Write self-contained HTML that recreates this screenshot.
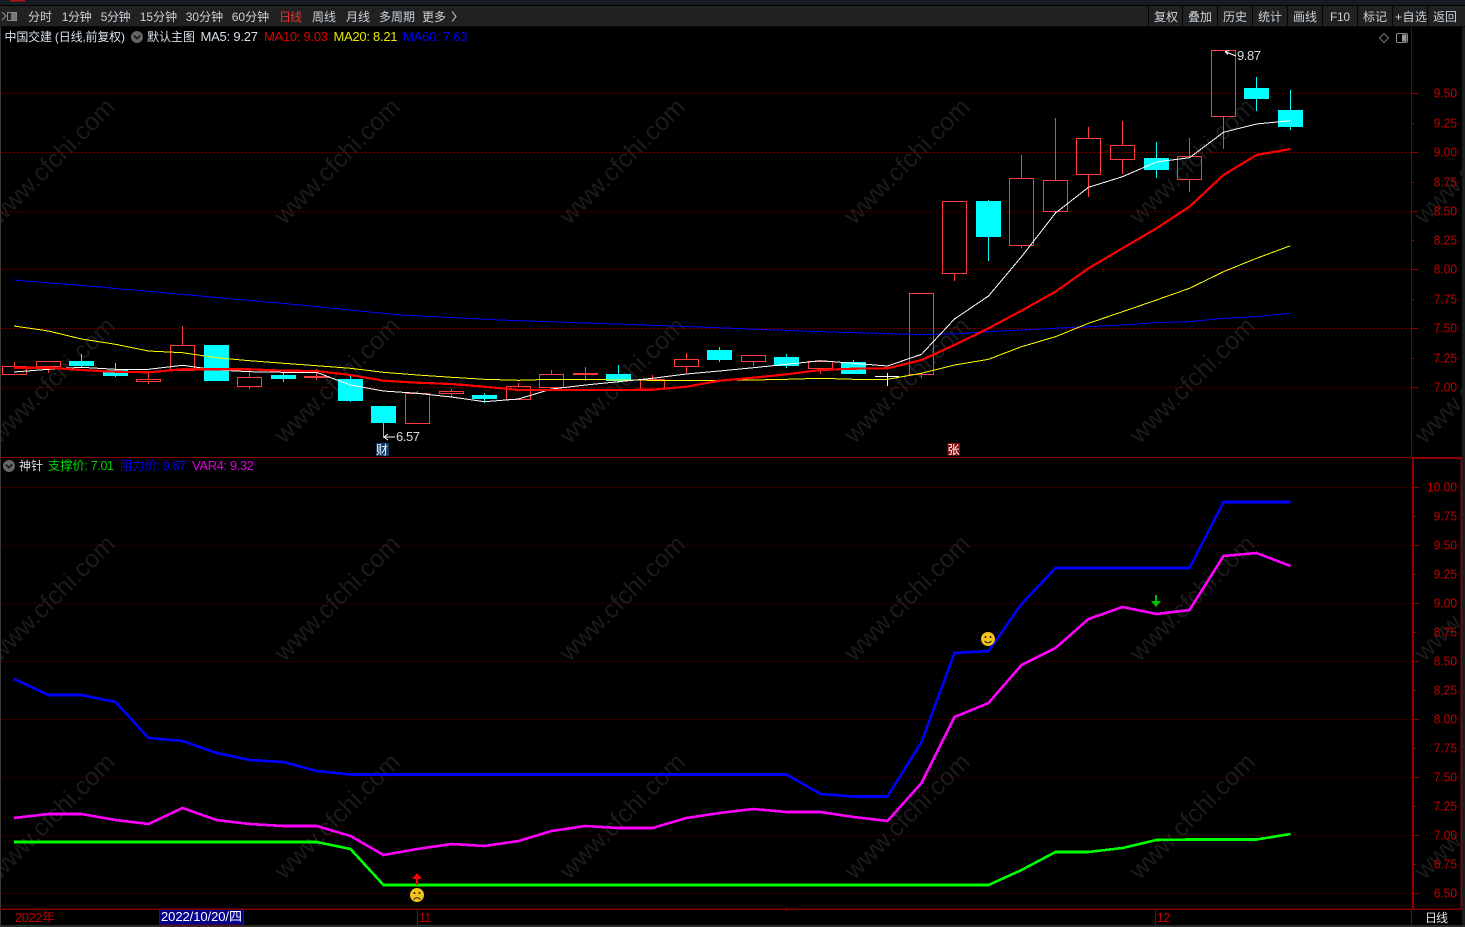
<!DOCTYPE html>
<html><head><meta charset="utf-8"><style>
html,body{margin:0;padding:0;background:#000;width:1465px;height:927px;overflow:hidden}
svg{display:block;font-family:"Liberation Sans","Noto Sans CJK SC",sans-serif}
.tb{fill:#c9d2da;font-size:12px}.ax{fill:#c00000;font-size:13px}
.wm{fill:#1b1b1b;font-size:25px;text-anchor:middle}
.l{fill:none;shape-rendering:crispEdges}
</style></head><body>
<svg width="1465" height="927" viewBox="0 0 1465 927" xmlns="http://www.w3.org/2000/svg">
<rect width="1465" height="927" fill="#000"/>
<!-- title / toolbar -->
<rect width="1465" height="5" fill="#171c22"/><rect x="10" width="15" height="1.5" fill="#b01818"/>
<rect y="6" width="1465" height="20" fill="#212121"/><rect y="26" width="1465" height="1" fill="#0a0a0a"/>
<g stroke="#050505"><path d="M1148.5 6V26M1182.5 6V26M1217.5 6V26M1252.5 6V26M1287.5 6V26M1322.5 6V26M1357.5 6V26M1392.5 6V26M1427.5 6V26"/></g>
<path d="M2 12l4 4-4 4" fill="none" stroke="#888" stroke-width="1.2"/><rect x="7.5" y="12.5" width="9" height="8" fill="#777" stroke="#888"/><rect x="8" y="13" width="3" height="7" fill="#222"/>
<g class="tb">
<text x="28" y="21" textLength="24">分时</text><text x="61.7" y="21" textLength="30">1分钟</text><text x="100.7" y="21" textLength="30">5分钟</text><text x="139.7" y="21" textLength="37.5">15分钟</text><text x="185.7" y="21" textLength="37.5">30分钟</text><text x="231.7" y="21" textLength="37.5">60分钟</text>
<text x="279" y="21" textLength="23" style="fill:#e83030">日线</text><text x="312" y="21" textLength="24">周线</text><text x="346" y="21" textLength="24">月线</text><text x="379" y="21" textLength="36">多周期</text><text x="422" y="21" textLength="24">更多</text>
<path d="M452 11.5l4 5-4 5" fill="none" stroke="#c9d2da"/>
<text x="1154" y="21" textLength="24">复权</text><text x="1188" y="21" textLength="24">叠加</text><text x="1223" y="21" textLength="24">历史</text><text x="1258" y="21" textLength="24">统计</text><text x="1293" y="21" textLength="24">画线</text><text x="1330" y="21" textLength="20">F10</text><text x="1363" y="21" textLength="24">标记</text><text x="1395" y="21" textLength="32">+自选</text><text x="1433" y="21" textLength="24">返回</text>
</g>
<!-- watermarks -->
<g class="wm">
<text x="58" y="167" transform="rotate(-45 58 167)">www.cfchi.com</text><text x="343" y="167" transform="rotate(-45 343 167)">www.cfchi.com</text><text x="628" y="167" transform="rotate(-45 628 167)">www.cfchi.com</text><text x="913" y="167" transform="rotate(-45 913 167)">www.cfchi.com</text><text x="1198" y="167" transform="rotate(-45 1198 167)">www.cfchi.com</text><text x="1483" y="167" transform="rotate(-45 1483 167)">www.cfchi.com</text>
<text x="58" y="386" transform="rotate(-45 58 386)">www.cfchi.com</text><text x="343" y="386" transform="rotate(-45 343 386)">www.cfchi.com</text><text x="628" y="386" transform="rotate(-45 628 386)">www.cfchi.com</text><text x="913" y="386" transform="rotate(-45 913 386)">www.cfchi.com</text><text x="1198" y="386" transform="rotate(-45 1198 386)">www.cfchi.com</text><text x="1483" y="386" transform="rotate(-45 1483 386)">www.cfchi.com</text>
<text x="58" y="604" transform="rotate(-45 58 604)">www.cfchi.com</text><text x="343" y="604" transform="rotate(-45 343 604)">www.cfchi.com</text><text x="628" y="604" transform="rotate(-45 628 604)">www.cfchi.com</text><text x="913" y="604" transform="rotate(-45 913 604)">www.cfchi.com</text><text x="1198" y="604" transform="rotate(-45 1198 604)">www.cfchi.com</text><text x="1483" y="604" transform="rotate(-45 1483 604)">www.cfchi.com</text>
<text x="58" y="822" transform="rotate(-45 58 822)">www.cfchi.com</text><text x="343" y="822" transform="rotate(-45 343 822)">www.cfchi.com</text><text x="628" y="822" transform="rotate(-45 628 822)">www.cfchi.com</text><text x="913" y="822" transform="rotate(-45 913 822)">www.cfchi.com</text><text x="1198" y="822" transform="rotate(-45 1198 822)">www.cfchi.com</text><text x="1483" y="822" transform="rotate(-45 1483 822)">www.cfchi.com</text>
</g>
<!-- grid -->
<g stroke-dasharray="1 3" fill="none" shape-rendering="crispEdges">
<path stroke="#800000" d="M2 93.5H1411M2 211.5H1411M2 269.5H1411M2 387.5H1411"/>
<path stroke="#a00000" d="M2 152.5H1411M2 328.5H1411"/>
<path stroke="#600000" d="M2 487.5H1411M2 545.5H1411M2 603.5H1411M2 661.5H1411M2 719.5H1411M2 777.5H1411M2 835.5H1411M2 893.5H1411"/>
</g>
<!-- frames -->
<rect x="0" y="27" width="1" height="898" fill="#3a3a3a"/>
<rect x="1411" y="27" width="1" height="431" fill="#7a0000"/>
<rect y="457" width="1462" height="1" fill="#800000"/>
<rect x="1412" y="457" width="50" height="2" fill="#900000"/><rect x="1412" y="457" width="2" height="452" fill="#900000"/><rect x="1460.5" y="457" width="1.5" height="452" fill="#900000"/>
<rect y="908.5" width="1462" height="1.5" fill="#800000"/><rect x="1411" y="909" width="1" height="16" fill="#800000"/>
<rect y="925" width="1465" height="2" fill="#2a2a2a"/><rect x="1462" y="27" width="3" height="898" fill="#1c1c1c"/>
<!-- axis ticks -->
<path stroke="#900000" fill="none" shape-rendering="crispEdges" d="M1412 93.5h6M1412 123.5h2M1412 152.5h6M1412 182.5h2M1412 211.5h6M1412 240.5h2M1412 269.5h6M1412 299.5h2M1412 328.5h6M1412 358.5h2M1412 387.5h6M1414 487.5h5M1414 516.5h2M1414 545.5h5M1414 574.5h2M1414 603.5h5M1414 632.5h2M1414 661.5h5M1414 690.5h2M1414 719.5h5M1414 748.5h2M1414 777.5h5M1414 806.5h2M1414 835.5h5M1414 864.5h2M1414 893.5h5M417.5 909V925M1155.5 909V925M786.5 908v3"/>
<g class="ax" lengthAdjust="spacingAndGlyphs">
<text x="1433.7" y="97.5" textLength="23.3" lengthAdjust="spacingAndGlyphs">9.50</text><text x="1433.7" y="127.5" textLength="23.3" lengthAdjust="spacingAndGlyphs">9.25</text><text x="1433.7" y="156.5" textLength="23.3" lengthAdjust="spacingAndGlyphs">9.00</text><text x="1433.7" y="186.5" textLength="23.3" lengthAdjust="spacingAndGlyphs">8.75</text><text x="1433.7" y="215.5" textLength="23.3" lengthAdjust="spacingAndGlyphs">8.50</text><text x="1433.7" y="244.5" textLength="23.3" lengthAdjust="spacingAndGlyphs">8.25</text><text x="1433.7" y="273.5" textLength="23.3" lengthAdjust="spacingAndGlyphs">8.00</text><text x="1433.7" y="303.5" textLength="23.3" lengthAdjust="spacingAndGlyphs">7.75</text><text x="1433.7" y="332.5" textLength="23.3" lengthAdjust="spacingAndGlyphs">7.50</text><text x="1433.7" y="362.5" textLength="23.3" lengthAdjust="spacingAndGlyphs">7.25</text><text x="1433.7" y="391.5" textLength="23.3" lengthAdjust="spacingAndGlyphs">7.00</text>
<text x="1427" y="491.5" textLength="30" lengthAdjust="spacingAndGlyphs">10.00</text><text x="1433.7" y="520.5" textLength="23.3" lengthAdjust="spacingAndGlyphs">9.75</text><text x="1433.7" y="549.5" textLength="23.3" lengthAdjust="spacingAndGlyphs">9.50</text><text x="1433.7" y="578.5" textLength="23.3" lengthAdjust="spacingAndGlyphs">9.25</text><text x="1433.7" y="607.5" textLength="23.3" lengthAdjust="spacingAndGlyphs">9.00</text><text x="1433.7" y="636.5" textLength="23.3" lengthAdjust="spacingAndGlyphs">8.75</text><text x="1433.7" y="665.5" textLength="23.3" lengthAdjust="spacingAndGlyphs">8.50</text><text x="1433.7" y="694.5" textLength="23.3" lengthAdjust="spacingAndGlyphs">8.25</text><text x="1433.7" y="723.5" textLength="23.3" lengthAdjust="spacingAndGlyphs">8.00</text><text x="1433.7" y="752.5" textLength="23.3" lengthAdjust="spacingAndGlyphs">7.75</text><text x="1433.7" y="781.5" textLength="23.3" lengthAdjust="spacingAndGlyphs">7.50</text><text x="1433.7" y="810.5" textLength="23.3" lengthAdjust="spacingAndGlyphs">7.25</text><text x="1433.7" y="839.5" textLength="23.3" lengthAdjust="spacingAndGlyphs">7.00</text><text x="1433.7" y="868.5" textLength="23.3" lengthAdjust="spacingAndGlyphs">6.75</text><text x="1433.7" y="897.5" textLength="23.3" lengthAdjust="spacingAndGlyphs">6.50</text>
</g>
<!-- candles -->
<path fill="none" stroke="#ff3c3c" shape-rendering="crispEdges" d="M14.5 362V366M2.5 366.5H26.5V374.5H2.5ZM48.5 367V373M36.5 361.5H60.5V366.5H36.5ZM148.5 372V379M148.5 382V384M136.5 379.5H160.5V381.5H136.5ZM182.5 326V345M170.5 345.5H194.5V370.5H170.5ZM249.5 370V377M249.5 387V389M237.5 377.5H261.5V386.5H237.5ZM316.5 369V380M304.5 376.5H328.5V377.5H304.5ZM417.5 391V393M405.5 393.5H429.5V423.5H405.5ZM451.5 389V391M451.5 394V397M439.5 391.5H463.5V393.5H439.5ZM518.5 383V386M506.5 386.5H530.5V399.5H506.5ZM551.5 370V374M539.5 374.5H563.5V387.5H539.5ZM585.5 367V381M573.5 373.5H597.5V374.5H573.5ZM652.5 375V379M640.5 379.5H664.5V389.5H640.5ZM686.5 353V359M686.5 367V373M674.5 359.5H698.5V366.5H674.5ZM753.5 362V366M741.5 355.5H765.5V361.5H741.5ZM820.5 360V362M820.5 369V374M808.5 361.5H832.5V368.5H808.5ZM921.5 375V378M909.5 293.5H933.5V374.5H909.5ZM954.5 274V281M942.5 201.5H966.5V273.5H942.5ZM1021.5 155V178M1021.5 246V248M1009.5 178.5H1033.5V245.5H1009.5ZM1055.5 118V180M1055.5 212V214M1043.5 180.5H1067.5V211.5H1043.5ZM1088.5 127V138M1088.5 175V197M1076.5 138.5H1100.5V174.5H1076.5ZM1122.5 121V145M1122.5 160V174M1110.5 145.5H1134.5V159.5H1110.5ZM1189.5 138V156M1189.5 180V192M1177.5 156.5H1201.5V179.5H1177.5ZM1223.5 117V149M1211.5 50.5H1235.5V116.5H1211.5Z"/>
<path fill="none" stroke="#00ffff" shape-rendering="crispEdges" d="M81.5 354V367M115.5 363V377M283.5 372V382M350.5 376V402M383.5 423V438M484.5 393V403M618.5 365V383M719.5 347V362M786.5 354V368M853.5 360V374M988.5 200V261M1156.5 142V178M1256.5 77V111M1290.5 90V130"/>
<g fill="#00ffff"><rect x="69" y="361" width="25" height="5"/><rect x="103" y="370" width="25" height="6"/><rect x="204" y="345" width="25" height="36"/><rect x="271" y="375" width="25" height="4"/><rect x="338" y="379" width="25" height="22"/><rect x="371" y="406" width="25" height="17"/><rect x="472" y="395" width="25" height="4"/><rect x="606" y="374" width="25" height="7"/><rect x="707" y="350" width="25" height="10"/><rect x="774" y="357" width="25" height="9"/><rect x="841" y="362" width="25" height="12"/><rect x="976" y="201" width="25" height="36"/><rect x="1144" y="158" width="25" height="12"/><rect x="1244" y="88" width="25" height="11"/><rect x="1278" y="110" width="25" height="17"/></g>
<path fill="none" stroke="#fff" shape-rendering="crispEdges" d="M875 376.5H899M887.5 373V386"/>
<!-- MAs -->
<polyline class="l" stroke="#0000ff" stroke-width="1" points="14,280 100,287 200,296 300,305 400,315 500,320 600,323.5 700,327 800,331 900,334 921,334.5 954,334 988,331.7 1021,330 1055,328.3 1088,326.7 1122,325 1156,322.7 1189,321.7 1223,318.3 1256,316.7 1290,313.3"/>
<polyline class="l" stroke="#ffff00" stroke-width="1" points="14,326 48.5,331 81.5,339 115.5,344.3 148.5,351 182.5,352.7 216.5,357.7 249.5,360.7 283.5,363.3 316.5,365.7 350.5,368.3 383.5,372.3 417.5,375 451.5,377.3 484.5,379.3 518.5,380.3 551.5,379.3 585.5,379.3 618.5,380 652.5,380.3 686.5,380.3 719.5,380.3 753.5,380 786.5,379.3 820.5,378.3 853.5,379.3 887.5,379.3 921.5,373.3 954.5,365 988.5,359.3 1021.5,346.7 1055.5,336.7 1088.5,323.3 1122.5,311.7 1156.5,300 1189.5,288.3 1223.5,271.7 1256.5,258.3 1290.5,245.7"/>
<polyline class="l" stroke="#ffffff" stroke-width="1" points="14,372 48.5,369.3 81.5,367.3 115.5,369.3 148.5,369.3 182.5,365.3 216.5,370 249.5,371.7 283.5,372.3 316.5,372.3 350.5,385 383.5,391 417.5,393.3 451.5,397 484.5,401.7 518.5,399 551.5,389 585.5,385 618.5,381.7 652.5,378.3 686.5,374 719.5,371 753.5,367.7 786.5,364.3 820.5,360.7 853.5,363.3 887.5,366 921.5,354.3 954.5,319 988.5,296 1021.5,256.7 1055.5,213 1088.5,187.3 1122.5,176.7 1156.5,162 1189.5,157.7 1223.5,132.3 1256.5,124 1290.5,120.7"/>
<polyline class="l" stroke="#ff0000" stroke-width="2.2" points="14,367.7 48.5,367.7 81.5,370 115.5,371.7 148.5,372.3 182.5,369.3 216.5,369.3 249.5,369.3 283.5,370.7 316.5,371 350.5,375 383.5,380.7 417.5,382.7 451.5,384 484.5,386.7 518.5,390 551.5,390 585.5,390 618.5,390 652.5,389.7 686.5,386.7 719.5,380.7 753.5,377.7 786.5,374.3 820.5,370 853.5,368.7 887.5,368.3 921.5,360 954.5,345 988.5,328.3 1021.5,310.7 1055.5,291.7 1088.5,268.3 1122.5,248.3 1156.5,228.3 1189.5,206.7 1223.5,175 1256.5,155 1290.5,149"/>
<!-- price notes -->
<path d="M1236 56L1225 51.5M1225 51.5l4-1M1225 51.5l3 3" stroke="#fff" fill="none"/><text x="1237" y="60" fill="#d5dde5" font-size="13" textLength="24">9.87</text>
<path d="M395 437H384M384 437l4-3M384 437l4 3" stroke="#fff" fill="none"/><text x="396" y="441" fill="#d5dde5" font-size="13" textLength="24">6.57</text>
<rect x="376" y="443" width="13" height="13" fill="#123a66"/><text x="376" y="454" fill="#fff" font-size="12">财</text>
<rect x="947.5" y="443" width="12.5" height="12.5" fill="#8a0f0f"/><text x="947.5" y="454" fill="#fff" font-size="12">张</text>
<!-- header upper -->
<text x="4.5" y="41" fill="#d8e0e8" font-size="12" textLength="120.5">中国交建 (日线,前复权)</text>
<circle cx="137" cy="37" r="6" fill="#666"/><path d="M133.8 35.5l3.2 3.2 3.2-3.2" stroke="#111" stroke-width="1.5" fill="none"/>
<text x="147" y="41" fill="#d8e0e8" font-size="12" textLength="48">默认主图</text>
<text x="200.5" y="41" fill="#d8e0e8" font-size="13" textLength="57.5">MA5: 9.27</text>
<text x="264" y="41" fill="#e00000" font-size="13" textLength="64">MA10: 9.03</text>
<text x="333.5" y="41" fill="#e8e800" font-size="13" textLength="64">MA20: 8.21</text>
<text x="403" y="41" fill="#0000ff" font-size="13" textLength="64.5">MA60: 7.63</text>
<path d="M1384 33.5l4.5 4.5-4.5 4.5-4.5-4.5Z" fill="none" stroke="#777"/>
<rect x="1396.5" y="33.5" width="11" height="9" rx="1.5" fill="none" stroke="#888"/><rect x="1402" y="34.5" width="4.5" height="7" fill="#999"/>
<!-- lower header -->
<circle cx="9" cy="466" r="6" fill="#666"/><path d="M5.8 464.5l3.2 3.2 3.2-3.2" stroke="#111" stroke-width="1.5" fill="none"/>
<text x="19" y="470" fill="#d8e0e8" font-size="12" textLength="24">神针</text>
<text x="48" y="470" fill="#00d000" font-size="12.5" textLength="66">支撑价: 7.01</text>
<text x="120" y="470" fill="#0000ee" font-size="12.5" textLength="66">阻力价: 9.87</text>
<text x="192" y="470" fill="#e000e0" font-size="13" textLength="62">VAR4: 9.32</text>
<!-- lower lines -->
<polyline class="l" stroke="#0000ff" stroke-width="2.6" points="14,679 48.5,695 81.5,695 115.5,702 148.5,738 182.5,741 216.5,753 249.5,760 283.5,762 316.5,771 350.5,774.5 786.5,774.5 820.5,794 853.5,796.5 887.5,796.5 921.5,742 954.5,653 988.5,651 1021.5,604 1055.5,568 1189.5,568 1223.5,502 1290.5,502"/>
<polyline class="l" stroke="#ff00ff" stroke-width="2.6" points="14,818 48.5,814 81.5,814 115.5,820 148.5,824 182.5,808 216.5,820 249.5,824 283.5,826 316.5,826 350.5,836 383.5,855 417.5,849 451.5,844 484.5,846 518.5,841 551.5,831 585.5,826 618.5,828 652.5,828 686.5,818 719.5,813 753.5,809 786.5,812 820.5,812 853.5,817 887.5,821 921.5,783 954.5,717 988.5,703 1021.5,665 1055.5,648 1088.5,619 1122.5,607 1156.5,614 1189.5,610 1223.5,556 1256.5,553 1290.5,566"/>
<polyline class="l" stroke="#00ff00" stroke-width="2.6" points="14,842 316.5,842 350.5,849 383.5,885 988.5,885 1021.5,870 1055.5,852 1088.5,852 1122.5,848 1156.5,840 1189.5,839.5 1256.5,839.5 1290.5,834"/>
<!-- markers -->
<path d="M417 885V878" stroke="#ff0000" stroke-width="2"/><path d="M412 879l5-6 5 6Z" fill="#ff0000"/>
<path d="M1156 595V602" stroke="#00c000" stroke-width="2"/><path d="M1151 601l5 6 5-6Z" fill="#00c000"/>
<circle cx="417" cy="895" r="7" fill="#f2c21b"/><circle cx="414.5" cy="893" r="1" fill="#222"/><circle cx="419.5" cy="893" r="1" fill="#222"/><path d="M413.5 899.5q3.5-3.5 7 0" stroke="#222" fill="none"/>
<circle cx="988" cy="639" r="7" fill="#f2c21b"/><circle cx="985.5" cy="637" r="1" fill="#222"/><circle cx="990.5" cy="637" r="1" fill="#222"/><path d="M984.5 641q3.5 3.5 7 0" stroke="#222" fill="none"/>
<!-- time axis -->
<text x="15" y="922" fill="#c00000" font-size="13" textLength="40">2022年</text>
<rect x="159.5" y="909.5" width="84" height="15.5" fill="#00008b" stroke="#7a0000"/>
<text x="161" y="921" fill="#fff" font-size="13" textLength="81">2022/10/20/四</text>
<text x="419" y="922" fill="#c00000" font-size="13" textLength="12" lengthAdjust="spacingAndGlyphs">11</text>
<text x="1157" y="922" fill="#c00000" font-size="13" textLength="13" lengthAdjust="spacingAndGlyphs">12</text>
<text x="1425" y="922" fill="#e0e4e8" font-size="12" textLength="23">日线</text>
</svg>
</body></html>
